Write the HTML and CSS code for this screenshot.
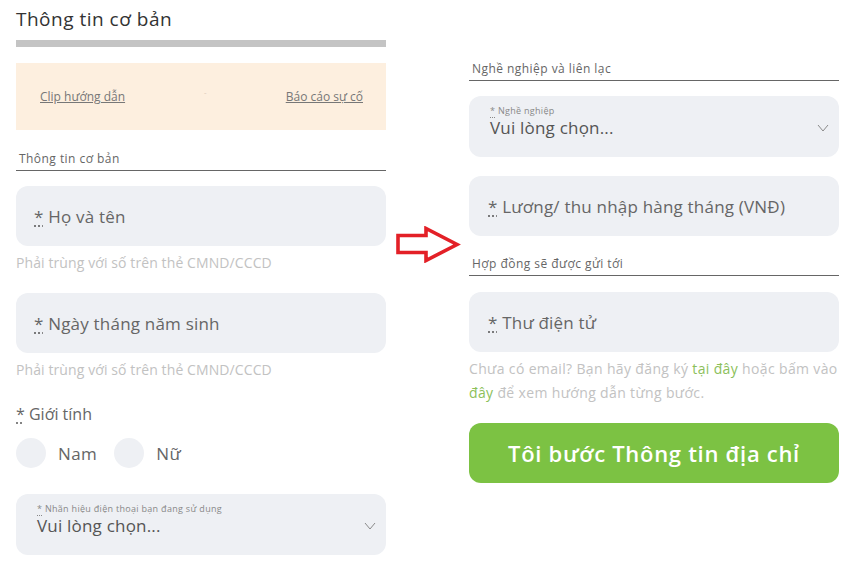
FILE: index.html
```html
<!DOCTYPE html>
<html lang="vi">
<head>
    <meta charset="UTF-8">
    <meta name="viewport" content="width=device-width, initial-scale=1.0">
    <title>Thông tin cơ bản</title>
    <link rel="stylesheet" href="styles.css">
</head>
<body>
    <div class="page">
        <!-- cột trái: thông tin cơ bản -->
        <div class="col col-left">
            <h1 class="title">Thông tin cơ bản</h1>
            <div class="bar"></div>
            <div class="notice">
                <a href="#">Clip hướng dẫn</a>
                <span class="dot">-</span>
                <a href="#">Báo cáo sự cố</a>
            </div>
            <h2 class="section">Thông tin cơ bản</h2>
            <div class="field"><span><abbr>*</abbr> Họ và tên</span></div>
            <p class="hint">Phải trùng với số trên thẻ CMND/CCCD</p>
            <div class="field field-gap"><span><abbr>*</abbr> Ngày tháng năm sinh</span></div>
            <p class="hint">Phải trùng với số trên thẻ CMND/CCCD</p>
            <div class="gender"><abbr>*</abbr> Giới tính</div>
            <div class="radios">
                <label><span class="circle"></span>Nam</label>
                <label><span class="circle"></span>Nữ</label>
            </div>
            <div class="select select-phone">
                <div class="select-text">
                    <small><abbr>*</abbr> Nhãn hiệu điện thoại bạn đang sử dụng</small>
                    <span>Vui lòng chọn...</span>
                </div>
                <svg class="chev" width="12" height="8" viewBox="0 0 12 8"><path d="M1 1 L6 7 L11 1" fill="none" stroke="#8a8a8a" stroke-width="1"/></svg>
            </div>
        </div>

        <!-- mũi tên ở giữa -->
        <div class="col col-mid">
            <svg class="arrow" width="66" height="37" viewBox="0 0 66 37"><path d="M3 9.5 H31 V2.5 L62 18.5 L31 34.5 V26.5 H3 Z" fill="#fff" stroke="#e32027" stroke-width="3.6" stroke-linejoin="miter"/></svg>
        </div>

        <!-- cột phải: nghề nghiệp và liên lạc -->
        <div class="col col-right">
            <h2 class="section">Nghề nghiệp và liên lạc</h2>
            <div class="select select-job">
                <div class="select-text">
                    <small><abbr>*</abbr> Nghề nghiệp</small>
                    <span>Vui lòng chọn...</span>
                </div>
                <svg class="chev" width="12" height="8" viewBox="0 0 12 8"><path d="M1 1 L6 7 L11 1" fill="none" stroke="#8a8a8a" stroke-width="1"/></svg>
            </div>
            <div class="field field-salary"><span><abbr>*</abbr> Lương/ thu nhập hàng tháng (VNĐ)</span></div>
            <h2 class="section section-mail">Hợp đồng sẽ được gửi tới</h2>
            <div class="field field-mail"><span><abbr>*</abbr> Thư điện tử</span></div>
            <p class="mail-hint">Chưa có email? Bạn hãy đăng ký <a href="#">tại đây</a> hoặc bấm vào<br><a href="#">đây</a> để xem hướng dẫn từng bước.</p>
            <button class="btn">Tôi bước Thông tin địa chỉ</button>
        </div>
    </div>
</body>
</html>
```

FILE: styles.css
```css
* { margin: 0; padding: 0; box-sizing: border-box; }
body, html {
    width: 100%;
    height: 100%;
    background: #fff;
    font-family: "Open Sans", "Noto Sans", sans-serif;
    color: #555;
}
.page {
    display: flex;
    padding-left: 16px;
}
.col {
    width: 370px;
    display: flex;
    flex-direction: column;
}
.col-mid {
    width: 83px;
    align-items: center;
    padding-top: 226px;
}
.title {
    font-size: 19px;
    font-weight: 400;
    line-height: 26px;
    letter-spacing: 0.5px;
    padding-top: 6px;
    color: #333;
}
.bar {
    height: 7px;
    margin-top: 8px;
    background: #c4c4c4;
}
.notice {
    height: 67px;
    margin-top: 16px;
    background: #fdefdf;
    display: flex;
    align-items: center;
    justify-content: space-between;
    padding: 0 23px 0 24px;
    font-size: 12px;
}
.notice a { color: #777; }
.dot { color: #d8c8b8; font-size: 8px; margin-top: -10px; }
.section {
    font-size: 12px;
    font-weight: 400;
    line-height: 18px;
    letter-spacing: 0.45px;
    padding: 0 3px 2px;
    color: #666;
    border-bottom: 1px solid #666;
    margin-top: 20px;
}
abbr {
    text-decoration: underline dotted;
    text-underline-offset: 3px;
}
.field {
    height: 60px;
    margin-top: 15px;
    background: #eef0f4;
    border-radius: 12px;
    display: flex;
    align-items: center;
    padding-left: 18px;
    font-size: 17px;
    letter-spacing: 0.2px;
    color: #666;
}
.field-gap { margin-top: 20px; }
.hint {
    font-size: 14px;
    line-height: 20px;
    letter-spacing: 0.1px;
    margin-top: 7px;
    color: #c2c2c2;
}
.gender {
    font-size: 16px;
    line-height: 24px;
    margin-top: 22px;
    color: #666;
}
.radios {
    display: flex;
    gap: 17px;
    margin-top: 12px;
}
.radios label {
    display: flex;
    align-items: center;
    gap: 12px;
    font-size: 17px;
    letter-spacing: 0.4px;
    color: #666;
}
.circle {
    width: 30px;
    height: 30px;
    border-radius: 50%;
    background: #eef0f4;
}
.select {
    height: 61px;
    background: #eef0f4;
    border-radius: 12px;
    display: flex;
    align-items: center;
    justify-content: space-between;
    padding: 0 10px 0 21px;
}
.select-phone { margin-top: 26px; }
.select-text {
    display: flex;
    flex-direction: column;
    margin-bottom: 10px;
}
.select-text small {
    font-size: 9px;
    line-height: 12px;
    letter-spacing: 0.3px;
    color: #888;
}
.select-text span {
    font-size: 17px;
    line-height: 22px;
    letter-spacing: 0.2px;
    color: #555;
}
.chev { margin-top: 2px; }
.col-right { padding-top: 40px; }
.select-job { margin-top: 15px; }
.field-salary { margin-top: 19px; padding-left: 19px; }
.section-mail { margin-top: 19px; }
.field-mail { margin-top: 16px; padding-left: 19px; }
.mail-hint {
    font-size: 14px;
    line-height: 24px;
    letter-spacing: 0.35px;
    margin-top: 5px;
    color: #c2c2c2;
    white-space: nowrap;
}
.mail-hint a {
    color: #8cbf5a;
    text-decoration: none;
}
.btn {
    height: 60px;
    margin-top: 18px;
    border: none;
    border-radius: 12px;
    background: #7cc243;
    color: #fff;
    font-family: inherit;
    font-size: 22px;
    font-weight: 600;
    letter-spacing: 0.7px;
}
```
